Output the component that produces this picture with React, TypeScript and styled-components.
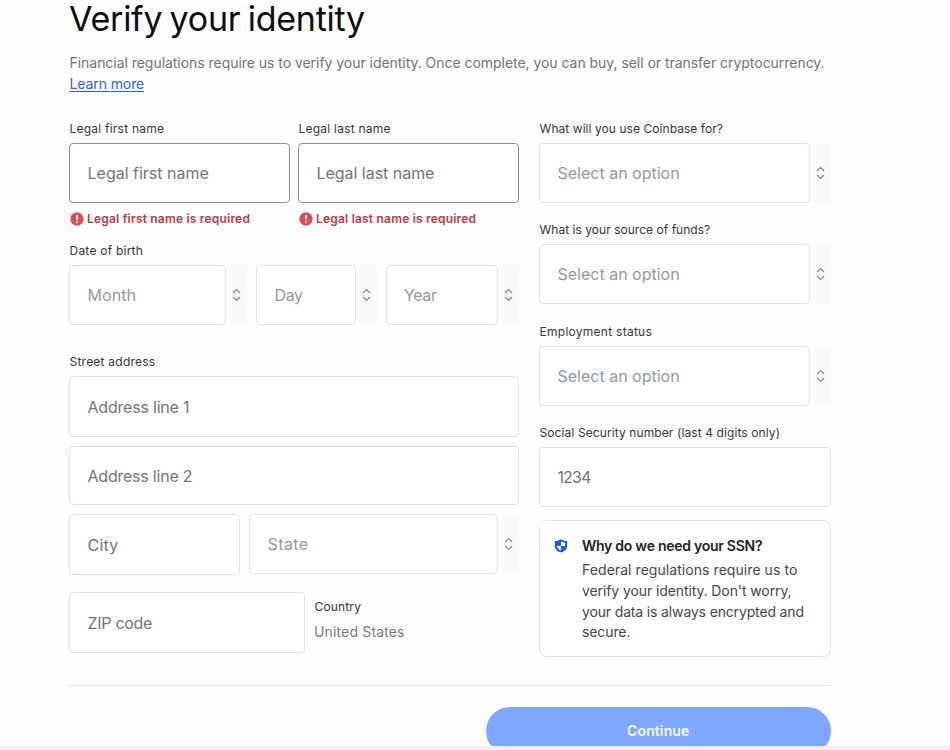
import React from "react";
import styled, { createGlobalStyle } from "styled-components";

const GlobalStyle = createGlobalStyle`
  * { box-sizing: border-box; }
  body {
    margin: 0;
    background: #fefefe;
    font-family: Inter, "Liberation Sans", sans-serif;
    overflow: hidden;
  }
`;

const Screen = styled.div`
  display: flex;
  flex-direction: column;
  height: 750px;
  overflow: hidden;
  background: #fefefe;
`;

const Page = styled.main`
  flex: 1;
  min-height: 0;
  overflow: hidden;
  width: 762px;
  margin-left: 69px;
`;

const BottomStrip = styled.div`
  flex: none;
  height: 4px;
  background: #f0f0f7;
`;

const Title = styled.h1`
  margin: 0;
  height: 39px;
  line-height: 37px;
  font-size: 34px;
  font-weight: 400;
  letter-spacing: -0.25px;
  word-spacing: -2px;
  color: #0c0d10;
  white-space: nowrap;
`;

const Intro = styled.p`
  margin: 13px 0 0;
  height: 69px;
  padding-left: 0.5px;
  font-size: 14px;
  line-height: 21px;
  letter-spacing: -0.04px;
  color: #71747c;
  white-space: nowrap;
`;

const LearnMore = styled.a`
  color: #2f62dc;
  letter-spacing: -0.1px;
  text-decoration: underline;
  text-underline-offset: 2px;
`;

const Columns = styled.div`
  display: grid;
  grid-template-columns: 450px 292px;
  column-gap: 20px;
  height: 564px;
`;

const Column = styled.div`
  display: flex;
  flex-direction: column;
`;

const Row = styled.div<{ $columns: string; $gap?: number; $top?: number }>`
  display: grid;
  grid-template-columns: ${(p) => p.$columns};
  column-gap: ${(p) => p.$gap ?? 9}px;
  margin-top: ${(p) => p.$top ?? 0}px;
  align-items: start;
`;

const Field = styled.div<{ $height?: number }>`
  height: ${(p) => (p.$height ? `${p.$height}px` : "auto")};
`;

const Label = styled.div<{ $track?: number; $top?: number }>`
  height: 22px;
  margin-top: ${(p) => p.$top ?? 0}px;
  padding-left: 0.5px;
  font-size: 12px;
  line-height: 16px;
  letter-spacing: ${(p) => p.$track ?? 0.23}px;
  color: #35373c;
  white-space: nowrap;
`;

const Input = styled.div<{ $tone?: "strong" | "soft"; $height?: number; $top?: number; $track?: number }>`
  display: flex;
  align-items: center;
  height: ${(p) => p.$height ?? 60}px;
  margin-top: ${(p) => p.$top ?? 0}px;
  padding-left: 17.5px;
  border: 1px solid ${(p) => (p.$tone === "strong" ? "#8f9197" : "#e2e3e6")};
  border-radius: 4px;
  background: #fff;
  color: ${(p) => (p.$tone === "soft" ? "#929aa6" : "#73757c")};
  font-size: 16px;
  line-height: 24px;
  letter-spacing: ${(p) => p.$track ?? 0}px;
  white-space: nowrap;
`;

const SelectFrame = styled.div`
  display: grid;
  grid-template-columns: minmax(0, 1fr) 17px;
  column-gap: 4px;
  height: 60px;
`;

const Stepper = styled.div`
  display: flex;
  align-items: center;
  padding-left: 2px;
  background: #fafafb;
`;

const ErrorLine = styled.div<{ $track: number }>`
  display: flex;
  align-items: center;
  gap: 3px;
  height: 16px;
  margin: 8px 0 0 1px;
  font-size: 12px;
  font-weight: 600;
  line-height: 16px;
  letter-spacing: ${(p) => p.$track}px;
  color: #bf3745;
  white-space: nowrap;
`;

const Country = styled.div`
  padding-top: 7px;
`;

const CountryName = styled.div`
  font-size: 14px;
  line-height: 21px;
  letter-spacing: 0.15px;
  color: #777a84;
`;

const Notice = styled.section`
  display: grid;
  grid-template-columns: 28px 1fr;
  height: 137px;
  margin-top: 13px;
  padding: 14px 0 0 14px;
  border: 1px solid #e2e3e6;
  border-radius: 8px;
  background: #fff;
`;

const ShieldSlot = styled.div`
  padding-top: 2px;
`;

const NoticeTitle = styled.div`
  height: 25px;
  font-size: 14px;
  font-weight: 600;
  line-height: 21px;
  letter-spacing: -0.26px;
  color: #202226;
`;

const NoticeLine = styled.div<{ $track: number }>`
  font-size: 14px;
  line-height: 20.8px;
  letter-spacing: ${(p) => p.$track}px;
  color: #44464b;
  white-space: nowrap;
`;

const Footer = styled.footer`
  display: flex;
  justify-content: flex-end;
  padding-top: 21px;
  border-top: 1px solid #e3e4e7;
`;

const ContinueButton = styled.button`
  width: 345.5px;
  height: 48px;
  padding: 0;
  border: 0;
  border-radius: 24px;
  background: #7fa7ff;
  color: #f8faff;
  font-family: inherit;
  font-size: 14px;
  font-weight: 600;
  line-height: 20px;
  letter-spacing: 0.12px;
`;

const Chevrons = () => (
  <svg width="9" height="14" viewBox="0 0 9 14" fill="none" stroke="#85878c" strokeWidth="1.2">
    <path d="M1 5 4.5 1.5 8 5M1 9 4.5 12.5 8 9" />
  </svg>
);

const AlertIcon = () => (
  <svg width="14" height="14" viewBox="0 0 14 14">
    <circle cx="7" cy="7" r="6.7" fill="#d9505c" />
    <path d="M7 3v4.8" stroke="#fff" strokeWidth="1.8" />
    <circle cx="7" cy="10.2" r="1.05" fill="#fff" />
  </svg>
);

const ShieldIcon = () => (
  <svg width="14" height="14" viewBox="0 0 14 14">
    <path d="M7 0.2C8.6 1.3 10.8 1.9 13.2 2v4.6c0 3.5-2.3 5.9-6.2 7-3.9-1.1-6.2-3.5-6.2-7V2C3.2 1.9 5.4 1.3 7 .2Z" fill="#1f5bea" />
    <path d="M7 2.5c1.2.7 2.6 1.1 4.1 1.2V7H7Z" fill="#fff" />
    <path d="M7 7v4.5C4.700 10.700 3.200 9.200 2.900 7Z" fill="#fff" />
  </svg>
);

const Select = ({ text, track }: { text: string; track?: number }) => (
  <SelectFrame>
    <Input $tone="soft" $track={track}>{text}</Input>
    <Stepper>
      <Chevrons />
    </Stepper>
  </SelectFrame>
);

export default function App() {
  return (
    <>
      <GlobalStyle />
      <Screen>
        <Page>
          <Title>Verify your identity</Title>
          <Intro>
            Financial regulations require us to verify your identity. Once complete, you can buy, sell or transfer
            cryptocurrency.
            <br />
            <LearnMore>Learn more</LearnMore>
          </Intro>
          <Columns>
            <Column>
              <Row $columns="221px 221px" $gap={8}>
                <Field>
                  <Label>Legal first name</Label>
                  <Input $tone="strong">Legal first name</Input>
                  <ErrorLine $track={0.2}>
                    <AlertIcon />
                    Legal first name is required
                  </ErrorLine>
                </Field>
                <Field>
                  <Label>Legal last name</Label>
                  <Input $tone="strong" $track={-0.03}>Legal last name</Input>
                  <ErrorLine $track={0.2}>
                    <AlertIcon />
                    Legal last name is required
                  </ErrorLine>
                </Field>
              </Row>
              <Label $top={16}>Date of birth</Label>
              <Row $columns="178px 120.5px 133.500px" $gap={9}>
                <Select text="Month" track={0.05} />
                <Select text="Day" track={-0.4} />
                <Select text="Year" track={-0.4} />
              </Row>
              <Label $top={29}>Street address</Label>
              <Input $height={61} $track={-0.2}>Address line 1</Input>
              <Input $height={59} $top={9} $track={-0.22}>Address line 2</Input>
              <Row $columns="171px 269.5px" $top={9}>
                <Input $height={61} $track={0.25}>City</Input>
                <Select text="State" track={0.4} />
              </Row>
              <Row $columns="236px 1fr" $top={17}>
                <Input $height={61} $track={-0.3}>ZIP code</Input>
                <Country>
                  <Label $track={0.15}>Country</Label>
                  <CountryName>United States</CountryName>
                </Country>
              </Row>
            </Column>
            <Column>
              <Field $height={101}>
                <Label $track={0.06}>What will you use Coinbase for?</Label>
                <Select text="Select an option" />
              </Field>
              <Field $height={102}>
                <Label $track={0.03}>What is your source of funds?</Label>
                <Select text="Select an option" />
              </Field>
              <Field $height={101}>
                <Label $track={0.27}>Employment status</Label>
                <Select text="Select an option" />
              </Field>
              <Label $track={0.1}>Social Security number (last 4 digits only)</Label>
              <Input $track={-0.9}>1234</Input>
              <Notice>
                <ShieldSlot>
                  <ShieldIcon />
                </ShieldSlot>
                <div>
                  <NoticeTitle>Why do we need your SSN?</NoticeTitle>
                  <NoticeLine $track={0.06}>Federal regulations require us to</NoticeLine>
                  <NoticeLine $track={-0.1}>verify your identity. Don't worry,</NoticeLine>
                  <NoticeLine $track={-0.15}>your data is always encrypted and</NoticeLine>
                  <NoticeLine $track={-0.1}>secure.</NoticeLine>
                </div>
              </Notice>
            </Column>
          </Columns>
          <Footer>
            <ContinueButton>Continue</ContinueButton>
          </Footer>
        </Page>
        <BottomStrip />
      </Screen>
    </>
  );
}
